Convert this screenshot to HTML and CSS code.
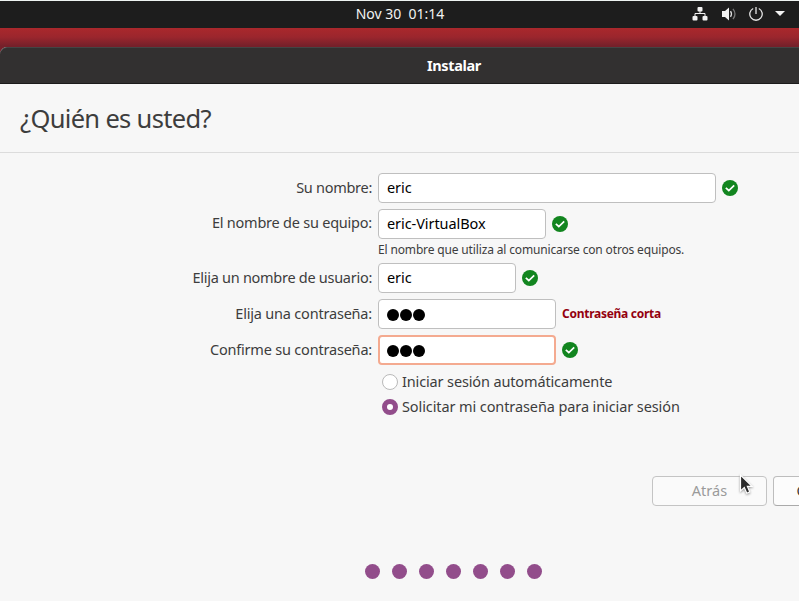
FILE: index.html
```html
<!DOCTYPE html>
<html lang="es">
<head>
<meta charset="utf-8">
<title>Instalar</title>
<link rel="stylesheet" href="styles.css">
</head>
<body>
<svg class="defs" width="0" height="0" aria-hidden="true">
  <symbol id="ok" viewBox="0 0 16 16"><circle cx="8" cy="8" r="8" fill="#12851f"/><path d="M3.800 7.900 6.800 10.500 12.200 5.400" fill="none" stroke="#fff" stroke-width="1.700"/></symbol>
</svg>
<header class="topbar">
  <time class="clock">Nov 30&nbsp; 01:14</time>
  <div class="tray">
    <svg class="net" width="16" height="14" viewBox="0 0 16 14" fill="#f2f2f2"><rect x="5.500" y="0" width="5" height="4.500" rx="1"/><rect x="0.500" y="9" width="5" height="4.500" rx="1"/><rect x="10.500" y="9" width="5" height="4.500" rx="1"/><path d="M8 4v3M3 9.500V6.500H13V9.500" fill="none" stroke="#f2f2f2"/></svg>
    <svg class="vol" width="16" height="14" viewBox="0 0 16 14" fill="#f2f2f2"><path d="M0 4h3L7 0.500V13.500L3 10H0Z"/><path d="M8.500 4.200Q10.500 7 8.500 9.800" fill="none" stroke="#ddd" stroke-width="1.300"/><path d="M11 1.800Q15 7 11 12.200" fill="none" stroke="#777" stroke-width="1.300"/></svg>
    <svg class="power" width="14" height="14" viewBox="0 0 14 14" fill="none" stroke="#e6e6e6" stroke-width="1.300"><path d="M4.200 1.500A6.200 6.200 0 1 0 9.800 1.500M7 0V7"/></svg>
    <svg class="caret" width="10" height="5" viewBox="0 0 10 5"><path d="M0 0H10L5 5Z" fill="#f2f2f2"/></svg>
  </div>
</header>
<div class="desktop">
<main class="window">
  <div class="titlebar">Instalar</div>
  <h1 class="heading">¿Quién es usted?</h1>
  <form class="form">
    <label class="snug">Su nombre:</label>
    <div class="field"><span class="entry w-name">eric</span><svg class="ok"><use href="#ok"/></svg></div>
    <label class="up">El nombre de su equipo:</label>
    <div class="field"><span class="entry w-host">eric-VirtualBox</span><svg class="ok"><use href="#ok"/></svg></div>
    <p class="hint">El nombre que utiliza al comunicarse con otros equipos.</p>
    <label class="snug">Elija un nombre de usuario:</label>
    <div class="field"><span class="entry w-user">eric</span><svg class="ok"><use href="#ok"/></svg></div>
    <label>Elija una contraseña:</label>
    <div class="field"><span class="entry w-pass"><i></i><i></i><i></i></span><strong class="weak">Contraseña corta</strong></div>
    <label>Confirme su contraseña:</label>
    <div class="field"><span class="entry w-pass focus"><i></i><i></i><i></i></span><svg class="ok"><use href="#ok"/></svg></div>
    <div class="choice first"><span class="radio"></span><span class="auto">Iniciar sesión automáticamente</span></div>
    <div class="choice"><span class="radio on"></span><span class="ask">Solicitar mi contraseña para iniciar sesión</span></div>
  </form>
  <div class="actions">
    <span class="button disabled">Atrás</span>
    <span class="button">Continuar</span>
  </div>
  <div class="dots"><i></i><i></i><i></i><i></i><i></i><i></i><i></i></div>
</main>
</div>
<svg class="pointer" width="16" height="22" viewBox="0 0 16 22"><path d="M1.500 1V17L5.300 13.600L7.800 19.200L10.800 17.900L8.400 12.400H13Z" fill="#2b2b2b" stroke="#fff" stroke-width="1.200"/></svg>
</body>
</html>
```

FILE: styles.css
```css
* { box-sizing: border-box; }
body {
  margin: 0;
  width: 799px;
  height: 601px;
  overflow: hidden;
  background: #f7f7f7;
  color: #3d3d3d;
  font: 14.5px/20px "Noto Sans", sans-serif;
}
.defs { position: absolute; }
svg { display: block; flex: none; }
.topbar {
  height: 28px;
  border-top: 1px solid #eef3f1;
  background: #1d1d1d;
  color: #f2f2f2;
  display: grid;
  grid-template-columns: 1fr auto 1fr;
  align-items: center;
  padding-bottom: 2px;
}
.clock { grid-column: 2; font-size: 14px; padding-left: 1px; }
.tray { display: flex; justify-content: flex-end; align-items: center; padding-right: 14px; }
.vol { margin-left: 14px; }
.power { margin-left: 11px; }
.caret { margin-left: 12px; }
.desktop { background: linear-gradient(#aa282c 0, #9b262d 9px, #75202a 18px, #75202a 100%); padding-top: 19px; }
.window { height: 554px; background: #f7f7f7; border-radius: 7px 0 0 0; }
.titlebar {
  height: 37px;
  background: #323030;
  border-top: 1px solid #444;
  border-bottom: 1px solid #1c1b1b;
  border-radius: 7px 0 0 0;
  color: #fff;
  font-weight: 700;
  letter-spacing: -0.35px;
  display: flex;
  align-items: center;
  justify-content: center;
  padding: 0 0 1px 109px;
}
.heading { margin: 0; height: 69px; border-bottom: 1px solid #dcdcdc; padding: 0 20px; font-size: 25.5px; font-weight: 400; line-height: 69px; letter-spacing: -0.67px; }
.form { display: grid; grid-template-columns: 372px 1fr; column-gap: 6px; padding-top: 20px; }
.form label { height: 36px; line-height: 29px; text-align: right; white-space: nowrap; letter-spacing: -0.2px; }
.form label.snug { letter-spacing: -0.28px; }
.form label.up { line-height: 27px; letter-spacing: -0.23px; }
.field { height: 36px; display: flex; align-items: flex-start; }
.entry { height: 30px; border: 1px solid #bfbfbf; border-radius: 4px; background: #fff; color: #000; padding: 0 8px; line-height: 27px; letter-spacing: -0.07px; display: flex; }
.entry i { width: 12px; height: 12px; margin: 9px 1px 0 0; border-radius: 50%; background: #000; }
.w-name { width: 338px; }
.w-host { width: 168px; }
.w-user { width: 138px; }
.w-pass { width: 178px; }
.focus { border: 2px solid #f4aa90; padding: 0 7px; }
.focus i { margin-top: 8px; }
.ok { width: 16px; height: 16px; margin: 7px 0 0 6px; }
.weak { margin-left: 6px; color: #94000f; font-size: 12px; line-height: 29px; letter-spacing: -0.27px; }
.hint { grid-column: 2; margin: -4px 0 4px; height: 18px; font-size: 12px; line-height: 18px; letter-spacing: -0.15px; white-space: nowrap; }
.choice { grid-column: 2; height: 25px; padding-left: 4px; display: flex; align-items: center; gap: 4px; letter-spacing: -0.1px; white-space: nowrap; }
.choice.first { margin-top: -2px; }
.auto, .ask { padding-bottom: 2px; }
.auto { letter-spacing: -0.14px; }
.radio { width: 16px; height: 16px; border: 1px solid #b9b9b9; border-radius: 50%; background: #fff; }
.radio.on { border: 5.5px solid #924d8b; }
.actions { display: flex; gap: 6px; padding-left: 652px; margin-top: 57px; }
.button { flex: none; width: 115px; height: 30px; border: 1px solid #bdbdbd; border-bottom-color: #aaa; border-radius: 4px; background: #fcfcfc; line-height: 27px; text-align: center; color: #3d3d3d; }
.button.disabled { color: #9a9a9a; background: #fafafa; border-color: #c4c4c4; }
.dots { display: flex; gap: 12px; padding-left: 365px; margin-top: 58px; }
.dots i { width: 15px; height: 15px; border-radius: 50%; background: #924d8b; }
.pointer { position: absolute; left: 739px; top: 474px; filter: drop-shadow(0 1px 1px #999); }
```
